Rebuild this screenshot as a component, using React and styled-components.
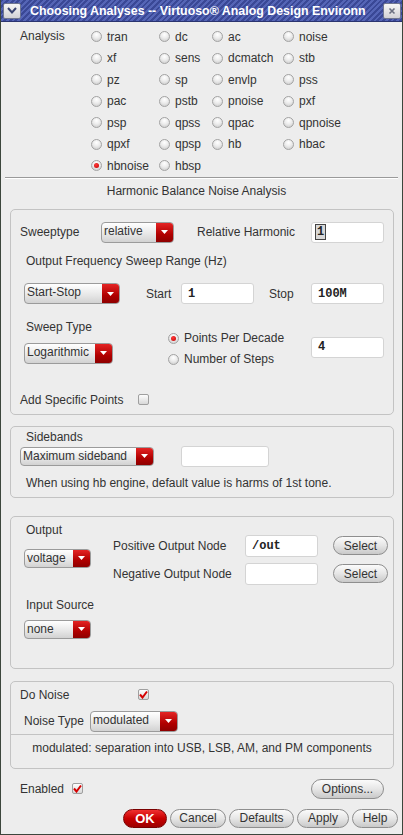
import React from 'react'
import styled, { createGlobalStyle, css } from 'styled-components'

const GlobalStyle = createGlobalStyle`
  html, body { margin: 0; padding: 0; background: #ececec; }
  body {
    font-family: "Liberation Sans", Arial, sans-serif;
    font-size: 12px;
    color: #333333;
  }
`

const Window = styled.div`
  width: 403px;
  height: 835px;
  box-sizing: border-box;
  border: 1px solid #3c463c;
  border-top: none;
  background: #ededed;
  display: flex;
  flex-direction: column;
  overflow: hidden;
`

const TitleBar = styled.div`
  height: 21px;
  flex: none;
  display: flex;
  align-items: center;
  padding: 0 1px 0 2px;
  gap: 9px;
  background: repeating-linear-gradient(135deg, #3a4896 0 2px, #5565b6 2px 4px);
  border-bottom: 1px solid #2a3470;
`

const TitleButton = styled.div`
  width: 18px;
  height: 16px;
  flex: none;
  box-sizing: border-box;
  border: 1px solid #6f7690;
  border-radius: 2px;
  background: linear-gradient(#f6f6f6, #d2d2d6);
  display: flex;
  align-items: center;
  justify-content: center;
`

const TitleText = styled.div`
  flex: 1;
  color: #fff;
  font-weight: bold;
  font-size: 12.4px;
  white-space: nowrap;
  overflow: hidden;
`

const AnalysisArea = styled.div`
  display: flex;
  padding: 4px 0 0 19px;
`

const AnalysisLabel = styled.div`
  width: 71px;
  height: 21.5px;
  line-height: 21.5px;
  flex: none;
`

const RadioGrid = styled.div`
  display: grid;
  grid-template-columns: 68px 53px 71px 1fr;
  grid-auto-rows: 21.5px;
  align-items: center;
  flex: 1;
`

const RadioItem = styled.label`
  display: flex;
  align-items: center;
  gap: 5px;
  white-space: nowrap;
  height: ${p => p.$h || 21.5}px;
`

const RadioDot = styled.span`
  width: 11px;
  height: 11px;
  flex: none;
  box-sizing: border-box;
  border-radius: 50%;
  border: 1px solid #a3a3a3;
  background: radial-gradient(circle at 50% 30%, #ffffff 0, #ececec 45%, #c6c6c6 100%);
  position: relative;
  ${p => p.$on && css`
    &::after {
      content: '';
      position: absolute;
      left: 2px;
      top: 2px;
      width: 5px;
      height: 5px;
      border-radius: 50%;
      background: radial-gradient(circle at 40% 35%, #ff3a3a, #c00000);
    }
  `}
`

const Separator = styled.div`
  margin: 0 4px;
  border-top: 1px solid #9a9a9a;
  border-bottom: 1px solid #ffffff;
`

const Heading = styled.div`
  margin-top: 2px;
  height: 20px;
  line-height: 20px;
  text-align: center;
  padding-right: 10px;
`

const Panel = styled.div`
  margin: ${p => p.$mt}px 8px 0 9px;
  border: 1px solid #c3c3c3;
  border-radius: 5px;
  padding: ${p => (p.$flush ? '0' : `0 9px ${p.$pb || 0}px`)};
  display: flex;
  flex-direction: ${p => (p.$row ? 'row' : 'column')};
`

const Row = styled.div`
  display: flex;
  align-items: center;
  height: ${p => p.$h || 20}px;
  margin-top: ${p => p.$mt || 0}px;
  margin-left: ${p => p.$ml || 0}px;
`

const Label = styled.span`
  flex: none;
  width: ${p => (p.$w ? `${p.$w}px` : 'auto')};
  margin-left: ${p => p.$ml || 0}px;
  white-space: nowrap;
`

const SelectBox = styled.div`
  display: flex;
  flex: none;
  width: ${p => p.$w}px;
  height: ${p => p.$h || 20}px;
  margin-left: ${p => p.$ml || 0}px;
  margin-top: ${p => p.$mt || 0}px;
  box-sizing: border-box;
  border: 1px solid #9b9b9b;
  border-radius: 4px;
  overflow: hidden;
  background: linear-gradient(#ffffff, #e6e6e6 60%, #d2d2d2);
`

const SelectText = styled.span`
  flex: 1;
  padding: 1px 0 0 2px;
  white-space: nowrap;
  overflow: hidden;
`

const SelectArrow = styled.span`
  width: 17px;
  flex: none;
  display: flex;
  align-items: center;
  justify-content: center;
  background: linear-gradient(#e42424, #b00000 60%, #8e0000);
`

const Field = styled.div`
  flex: none;
  width: ${p => p.$w}px;
  height: ${p => p.$h || 21}px;
  margin-left: ${p => p.$ml || 0}px;
  margin-top: ${p => p.$mt || 0}px;
  box-sizing: border-box;
  background: #fff;
  border: 1px solid #d4d4d4;
  border-radius: 3px;
  padding-left: 6px;
  display: flex;
  align-items: center;
  font: bold 12px "Liberation Mono", "DejaVu Sans Mono", monospace;
  color: #222;
`

const Caret = styled.span`
  background: #d8d8d8;
  outline: 1px solid #444;
  padding: 0 1px;
  margin-left: -2px;
`

const Check = styled.span`
  width: 11px;
  height: 11px;
  flex: none;
  box-sizing: border-box;
  border: 1px solid #9f9f9f;
  border-radius: 2px;
  background: linear-gradient(#fdfdfd, #d8d8d8);
  display: flex;
  align-items: center;
  justify-content: center;
`

const Button = styled.button`
  flex: none;
  width: ${p => p.$w}px;
  height: ${p => p.$h || 19}px;
  padding: 0;
  box-sizing: border-box;
  border: 1px solid #8e8e8e;
  border-radius: 10px;
  background: linear-gradient(#fbfbfb, #e6e6e6 50%, #c9c9c9);
  font-family: "Liberation Sans", Arial, sans-serif;
  font-size: 12px;
  color: #333;
  margin-left: ${p => p.$ml || 0}px;
  ${p => p.$primary && css`
    border-color: #7a0000;
    background: linear-gradient(#f03030, #c80000 50%, #9c0000);
    color: #fff;
    font-weight: bold;
    font-size: 13px;
  `}
`

const SweepBlock = styled.div`
  display: flex;
  margin-top: 11px;
`

const Column = styled.div`
  display: flex;
  flex-direction: column;
  flex: none;
  width: ${p => (p.$w ? `${p.$w}px` : 'auto')};
  padding-top: ${p => p.$pt || 0}px;
  padding-bottom: ${p => p.$pb || 0}px;
  gap: ${p => p.$gap || 0}px;
`

const NoiseTop = styled.div`
  padding: 0 9px 2px;
  display: flex;
  flex-direction: column;
`

const NoiseNote = styled.div`
  border-top: 1px solid #c3c3c3;
  padding: 3px 0 10px;
  height: 20px;
  line-height: 20px;
  text-align: center;
`

const Footer = styled.div`
  display: flex;
  align-items: center;
  height: 20px;
  margin-top: 10px;
  padding: 0 18px 0 19px;
`

const Spacer = styled.div`
  flex: 1;
`

const ButtonBar = styled.div`
  display: flex;
  justify-content: flex-end;
  gap: 3px;
  margin-top: 10px;
  padding-right: 4px;
`

const Arrow = () => (
  <svg width="7" height="4" viewBox="0 0 7 4">
    <path d="M0 0 H7 L3.5 4 Z" fill="#fff" />
  </svg>
)

const Select = ({ value, w, h, ml, mt }) => (
  <SelectBox $w={w} $h={h} $ml={ml} $mt={mt}>
    <SelectText>{value}</SelectText>
    <SelectArrow><Arrow /></SelectArrow>
  </SelectBox>
)

const CheckBox = ({ on }) => (
  <Check>
    {on && (
      <svg width="9" height="9" viewBox="0 0 9 9">
        <path d="M1 4.5 L3.5 7.5 L8 1.5" stroke="#d40000" strokeWidth="2" fill="none" />
      </svg>
    )}
  </Check>
)

const Radio = ({ label, on, h }) => (
  <RadioItem $h={h}>
    <RadioDot $on={on} />
    {label}
  </RadioItem>
)

const analyses = [
  'tran', 'dc', 'ac', 'noise',
  'xf', 'sens', 'dcmatch', 'stb',
  'pz', 'sp', 'envlp', 'pss',
  'pac', 'pstb', 'pnoise', 'pxf',
  'psp', 'qpss', 'qpac', 'qpnoise',
  'qpxf', 'qpsp', 'hb', 'hbac',
  'hbnoise', 'hbsp',
]

const App = () => {
  return (
    <Window>
      <GlobalStyle />
      <TitleBar>
        <TitleButton>
          <svg width="10" height="7" viewBox="0 0 10 7">
            <path d="M1 1 L5 5.5 L9 1" stroke="#3a4470" strokeWidth="2" fill="none" />
          </svg>
        </TitleButton>
        <TitleText>Choosing Analyses -- Virtuoso® Analog Design Environn</TitleText>
        <TitleButton>
          <svg width="8" height="8" viewBox="0 0 8 8">
            <path d="M1.5 1.5 L6.5 6.5 M6.5 1.5 L1.5 6.5" stroke="#6a6f80" strokeWidth="1.6" />
          </svg>
        </TitleButton>
      </TitleBar>

      <AnalysisArea>
        <AnalysisLabel>Analysis</AnalysisLabel>
        <RadioGrid>
          {analyses.map(a => (
            <Radio key={a} label={a} on={a === 'hbnoise'} />
          ))}
        </RadioGrid>
      </AnalysisArea>

      <Separator />
      <Heading>Harmonic Balance Noise Analysis</Heading>

      <Panel $mt={8} $pb={4}>
        <Row $h={21} $mt={12}>
          <Label $w={81}>Sweeptype</Label>
          <Select value="relative" w={73} h={21} />
          <Label $w={114} $ml={23}>Relative Harmonic</Label>
          <Field $w={73}><Caret>1</Caret></Field>
        </Row>
        <Row $mt={8} $ml={6}>
          <Label>Output Frequency Sweep Range (Hz)</Label>
        </Row>
        <Row $h={24} $mt={11}>
          <Select value="Start-Stop" w={96} h={21} ml={4} />
          <Label $w={35} $ml={26}>Start</Label>
          <Field $w={73}>1</Field>
          <Label $w={42} $ml={15}>Stop</Label>
          <Field $w={73}>100M</Field>
        </Row>
        <SweepBlock>
          <Column $w={148}>
            <Row $ml={6}><Label>Sweep Type</Label></Row>
            <Select value="Logarithmic" w={89} h={21} ml={4} mt={6} />
          </Column>
          <Column $w={143} $pt={11}>
            <Radio label="Points Per Decade" on h={21} />
            <Radio label="Number of Steps" h={21} />
          </Column>
          <Field $w={73} $mt={20}>4</Field>
        </SweepBlock>
        <Row $mt={20}>
          <Label $w={118}>Add Specific Points</Label>
          <CheckBox />
        </Row>
      </Panel>

      <Panel $mt={11} $pb={4}>
        <Row $h={17} $mt={2} $ml={6}>
          <Label>Sidebands</Label>
        </Row>
        <Row $h={21}>
          <Select value="Maximum sideband" w={134} h={19} />
          <Field $w={88} $ml={27} />
        </Row>
        <Row $mt={6} $ml={6}>
          <Label>When using hb engine, default value is harms of 1st tone.</Label>
        </Row>
      </Panel>

      <Panel $mt={18} $row>
        <Column $w={93} $pb={29}>
          <Row $mt={3} $ml={6}><Label>Output</Label></Row>
          <Select value="voltage" w={67} h={19} ml={4} mt={9} />
          <Row $mt={27} $ml={6}><Label>Input Source</Label></Row>
          <Select value="none" w={67} h={19} ml={4} mt={5} />
        </Column>
        <Column $pt={18} $gap={6}>
          <Row $h={22}>
            <Label $w={132}>Positive Output Node</Label>
            <Field $w={73} $h={22}>/out</Field>
            <Button $w={55} $ml={15}>Select</Button>
          </Row>
          <Row $h={22}>
            <Label $w={132}>Negative Output Node</Label>
            <Field $w={73} $h={22} />
            <Button $w={55} $ml={15}>Select</Button>
          </Row>
        </Column>
      </Panel>

      <Panel $mt={12} $flush>
        <NoiseTop>
          <Row $mt={3}>
            <Label $w={118}>Do Noise</Label>
            <CheckBox on />
          </Row>
          <Row $h={21} $mt={6} $ml={4}>
            <Label $w={66}>Noise Type</Label>
            <Select value="modulated" w={88} h={21} />
          </Row>
        </NoiseTop>
        <NoiseNote>modulated: separation into USB, LSB, AM, and PM components</NoiseNote>
      </Panel>

      <Footer>
        <Label $w={52}>Enabled</Label>
        <CheckBox on />
        <Spacer />
        <Button $w={73} $h={20}>Options...</Button>
      </Footer>

      <ButtonBar>
        <Button $w={44} $primary>OK</Button>
        <Button $w={56}>Cancel</Button>
        <Button $w={65}>Defaults</Button>
        <Button $w={52}>Apply</Button>
        <Button $w={46}>Help</Button>
      </ButtonBar>
    </Window>
  )
}

export default App
